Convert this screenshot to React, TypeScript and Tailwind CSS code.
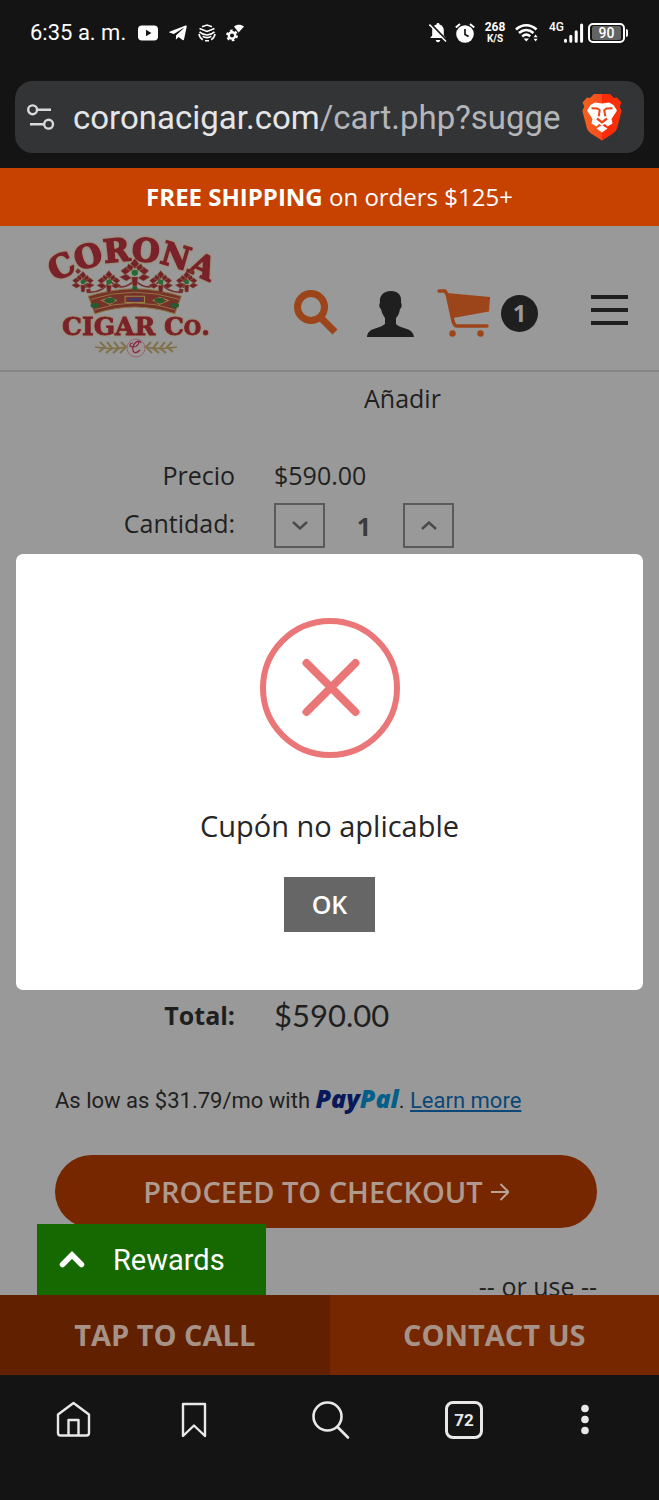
import React from "react";
import { FaTelegramPlane } from "react-icons/fa";

function StatusBar() {
  return (
    <div className="flex h-[66px] items-center justify-between pr-[31px] pl-[30px] text-white">
      <div className="flex items-center gap-[10px]">
        <span className="pr-[2px] text-[22px] leading-7">6:35 a. m.</span>
        <svg className="h-4 w-5" viewBox="0 0 20 16" aria-hidden="true">
          <rect width="20" height="15" y="0.5" rx="4" fill="#fff" />
          <path d="M8 4.800v6.400L13.400 8z" fill="#141414" />
        </svg>
        <FaTelegramPlane className="size-5" aria-hidden="true" />
        <svg className="size-[18px]" viewBox="0 0 18 18" fill="none" stroke="#fff" strokeWidth="1.6" aria-hidden="true">
          <path d="M4 2.800L9 1l5 1.800M1.500 4.600L9 7.400l7.500-2.800M1.500 7.800c2.400 2.200 4.700 3.200 7.500 3.200s5.100-1 7.500-3.200M4.600 12.400c2.800 1.600 6 1.600 8.800 0M1 9.800c.4 2.800 1.800 4.800 3.800 6M17 9.800c-.4 2.800-1.800 4.800-3.800 6M7 16.800h4" />
        </svg>
        <svg className="size-[18px]" viewBox="0 0 18 18" aria-hidden="true">
          <path d="M8 2.600C10.800.2 15 .2 18 2.600L12.600 8.600z" fill="#fff" />
          <circle cx="6" cy="11.400" r="3.200" fill="none" stroke="#fff" strokeWidth="2.400" />
          <circle cx="6" cy="11.400" r="4.900" fill="none" stroke="#fff" strokeWidth="2" strokeDasharray="2.600 2.530" />
        </svg>
      </div>
      <div className="flex items-center">
        <svg className="h-5 w-[18px]" viewBox="0 0 18 20" aria-hidden="true">
          <path d="M9 0c1 0 1.500.6 1.500 1.600 2.800.8 4.300 3 4.300 5.900v5l2 2.500H1.200l2-2.500v-5c0-2.900 1.500-5.100 4.300-5.900C7.500.6 8 0 9 0z" fill="#fff" />
          <path d="M6.800 17h4.400c0 1.300-1 2.200-2.200 2.200S6.800 18.300 6.800 17z" fill="#fff" />
          <path d="M1.500.6L18 17.600" stroke="#141414" strokeWidth="2" />
          <path d="M.4 1.600L17 18.600" stroke="#fff" strokeWidth="1.500" />
        </svg>
        <svg className="ml-2 h-5 w-5" viewBox="0 0 20 20" aria-hidden="true">
          <circle cx="10" cy="11" r="8.800" fill="#fff" />
          <path d="M.8 4.600L5 1M19.200 4.600L15 1" stroke="#fff" strokeWidth="2" />
          <path d="M10 6v5.400l3.600 2.200" stroke="#141414" strokeWidth="1.700" fill="none" />
        </svg>
        <div className="ml-[10px] flex w-5 flex-col items-center font-bold">
          <span className="text-[12px] leading-3">268</span>
          <span className="text-[10px] leading-3">K/S</span>
        </div>
        <svg className="ml-[10px] h-[20px] w-6" viewBox="0 0 24 20" fill="none" stroke="#fff" strokeWidth="2.600" aria-hidden="true">
          <path d="M1 6.500C7 .8 15.500.8 21.500 6.500M4 10c4.500-4 10-4 14.500 0M7.200 13.400c2.600-2.200 5.600-2.200 8 0" />
          <path d="M8.600 15.600h5.400L11.300 18.600zM18.600 14.200h4L20.600 11.600zM18.600 15.800h4L20.600 18.600z" fill="#fff" stroke="none" />
        </svg>
        <span className="ml-[10px] self-start text-[12px] leading-3 font-medium">4G</span>
        <svg className="h-5 w-5" viewBox="0 0 20 20" stroke="#fff" strokeWidth="3" strokeLinecap="round" aria-hidden="true">
          <path d="M1.500 18.200v-1M6.800 18.200v-5M12.200 18.200v-9.500M17.600 18.200V2" />
        </svg>
        <div className="ml-1 flex h-5 w-[37px] items-center justify-center rounded-[5px] border-2 border-white">
          <span className="flex h-[14px] w-[29px] items-center justify-center rounded-[2px] bg-[#636363] text-[14px] leading-4 font-medium">90</span>
        </div>
        <span className="ml-px h-2 w-[2px] rounded-r bg-white" />
      </div>
    </div>
  );
}

function BraveIcon() {
  return (
    <svg className="h-12 w-10" viewBox="0 0 40 48" aria-hidden="true">
      <defs>
        <linearGradient id="lion" x1="0" x2="1">
          <stop offset="0" stopColor="#f4631e" />
          <stop offset="0.500" stopColor="#fa4a1c" />
          <stop offset="0.500" stopColor="#ff2a05" />
          <stop offset="1" stopColor="#f5300c" />
        </linearGradient>
      </defs>
      <path d="M12 1h16l4 4 3-.6 4.400 5-1.600 4.200 1.800 4.400-4.600 17.400Q34 38.500 31 40.500L20 47.500 9 40.500Q6 38.500 5 35.400L.4 18l1.800-4.400L.6 9.400 5 4.400 8 5z" fill="url(#lion)" />
      <path d="M13 9.500l7 1 7-1 4.500 2.500 3.500 5.500-5.500 8.500 1 4.500-5 3-2.500-2.500-3 1.500-3-1.500-2.500 2.500-5-3 1-4.500L5 17.500 8.500 12z" fill="#fff" />
      <path d="M9.500 15.200l6 .3 2.200 1.800-1 6M30.500 15.200l-6 .3-2.200 1.800 1 6" fill="none" stroke="#ef4318" strokeWidth="2" />
      <path d="M15 25.500l5 3.800 5-3.800" fill="none" stroke="#ef4318" strokeWidth="2.200" />
      <path d="M20 32l5.500 3.600L20 39.500l-5.500-3.900z" fill="#fff" />
    </svg>
  );
}

function AddressBar() {
  return (
    <div className="mx-[15px] my-[15px] flex h-[72px] items-center rounded-[18px] bg-[#333436] pr-[22px] pl-3">
      <button type="button" aria-label="Site settings">
        <svg className="h-[26px] w-7" viewBox="0 0 28 26" fill="none" stroke="#d8dadd" strokeWidth="2.400" aria-hidden="true">
          <circle cx="5.600" cy="5.800" r="4.400" />
          <path d="M10 5.800h14M3 20.200h14" />
          <circle cx="21.600" cy="20.200" r="4.400" />
        </svg>
      </button>
      <button type="button" className="ml-[18px] min-w-0 flex-1 overflow-hidden pt-[2px] text-left text-[33px] leading-[46px] whitespace-nowrap text-[#b4b6b9]">
        <span className="text-[#e4e5e7]">coronacigar.com</span>/cart.php?sugge
      </button>
      <button type="button" aria-label="Shields" className="ml-5">
        <BraveIcon />
      </button>
    </div>
  );
}

function Flower({ x, y, s }: { x: number; y: number; s: number }) {
  return (
    <g transform={`translate(${x} ${y}) scale(${s})`}>
      <g fill="#74222a" stroke="#87703f" strokeWidth="0.500">
        <path d="M0-14l4 5-4 5-4-5zM-6-9l5 3-2 4-5-2zM6-9L1-6l2 4 5-2zM-13-2l5-4 4 4-5 4zM13-2L8-6 4-2l5 4zM-14 4l6-3 5 4-5 3zM14 4L8 1 3 5l5 3zM-3 4h6L2 13h-4z" />
      </g>
      <circle r="3" fill="#286b32" />
    </g>
  );
}

function Logo() {
  return (
    <svg className="h-[124px] w-[176px] overflow-visible" viewBox="0 0 176 124" role="img" aria-label="Corona Cigar Co.">
      <defs>
        <path id="arc" d="M-6 55Q86 -5 178 55" />
      </defs>
      <g
        className="drop-shadow-[0_0_1px_#a8813f]"
        fill="#7a222b"
        stroke="#7a222b"
        strokeWidth="1.400"
        fontFamily="'DejaVu Serif', serif"
        fontWeight="700"
      >
        <text fontSize="32">
          <textPath href="#arc" startOffset="50%" textAnchor="middle">CORONA</textPath>
        </text>
        <text x="90" y="99" fontSize="25" strokeWidth="0.800" textAnchor="middle">
          CIGAR C<tspan fontSize="20">O</tspan>.
        </text>
      </g>
      <g transform="translate(-3 -7) scale(1.080 1.020)">
        <g fill="none" stroke="#74322a" strokeWidth="1.600">
          <path d="M31 40q8 6 12 24M139 40q-8 6-12 24" strokeWidth="4" strokeDasharray="4 1.500" />
          <path d="M41 62c10 1 18-4 21-12 4 8 14 10 23 0 9 10 19 8 23 0 3 8 11 13 21 12" />
        </g>
        <path d="M42 66q43-15 86 0l-6 17q-37-13-74 0z" fill="#743228" stroke="#8b713e" strokeWidth="1" />
        <path d="M44 69q41-14 82 0M48 79q37-13 74 0" fill="none" stroke="#99804a" strokeWidth="0.800" />
        <path d="M54 70l8-3 6 3-6 4zM102 70l6-3 8 3-8 4zM76 66h18v6H76z" fill="none" stroke="#9b8249" strokeWidth="1" />
        <g fill="#275a30">
          <ellipse cx="62" cy="70" rx="4.500" ry="2.600" />
          <ellipse cx="108" cy="70" rx="4.500" ry="2.600" />
          <ellipse cx="48" cy="75" rx="4" ry="2.400" />
          <ellipse cx="122" cy="75" rx="4" ry="2.400" />
          <circle cx="85" cy="58" r="2.400" />
        </g>
        <rect x="79" y="67.500" width="12" height="3" fill="#453766" />
        <Flower x={85} y={43} s={1} />
        <Flower x={61} y={52} s={0.800} />
        <Flower x={109} y={52} s={0.800} />
        <Flower x={37} y={52} s={0.750} />
        <Flower x={133} y={52} s={0.750} />
      </g>
      <g transform="translate(4 0)">
        <g fill="none" stroke="#80714a" strokeWidth="2">
          <path d="M45 111q16 3 33 0M94 111q16 3 33 0" strokeWidth="1.300" />
          <path d="M50 106l5 5-6 5M57 106l5 6-6 5M64 106l5 6-6 5M71 106l5 5-6 6M122 106l-5 5 6 5M115 106l-5 6 6 5M108 106l-5 6 6 5M101 106l-5 5 6 6" />
        </g>
        <circle cx="86" cy="112" r="9" fill="#9c9696" stroke="#8b5960" strokeWidth="0.700" />
        <path d="M91 107c-1-4-7-1-8 4s2 8 7 3M83 107c-4 0-4 4 0 4 5 0 8-6 4-6" fill="none" stroke="#8a2540" strokeWidth="1.200" />
      </g>
    </svg>
  );
}

function SiteHeader() {
  return (
    <header className="flex h-[146px] items-start border-b-2 border-[#858585] pr-[31px] pl-[46px]">
      <a href="#home" className="mt-[10px]">
        <Logo />
      </a>
      <div className="mt-[60px] ml-auto flex items-center">
        <a href="#search" aria-label="Search">
          <svg className="size-[50px]" viewBox="1 1 50 50" fill="none" stroke="#9c451b" aria-hidden="true">
            <circle cx="20" cy="20" r="13.500" strokeWidth="7" />
            <path d="M30 31l14 14" strokeWidth="7" />
          </svg>
        </a>
        <a href="#account" aria-label="Account" className="ml-[23px]">
          <svg className="size-[50px]" viewBox="0 0 50 50" fill="#1f1f1f" aria-hidden="true">
            <path d="M26 3c-8 0-12 5-11 12-1 0-1 5 1 6 1 5 3 7 4 9v6c-5 5-17 3-18 13h47c-1-10-14-8-18-13v-6c2-2 3-4 4-9 2-1 2-6 1-6 1-7-2-12-10-12z" />
          </svg>
        </a>
        <a href="#cart" aria-label="Cart, 1 item" className="ml-[22px] flex items-center">
          <svg className="size-[54px]" viewBox="-1 -1 54 54" aria-hidden="true">
            <path d="M8.500 6L52 10l-1 14.500L15 31z" fill="#9c451b" />
            <path d="M1 4h6l2 3 6 27c1 4 2 5 4 5h30" fill="none" stroke="#9c451b" strokeWidth="3.400" strokeLinecap="round" />
            <circle cx="14.500" cy="46.500" r="3.200" fill="#9c451b" />
            <circle cx="42.500" cy="46.500" r="3.200" fill="#9c451b" />
          </svg>
          <span className="ml-[10px] flex size-[37px] items-center justify-center rounded-full bg-[#1f1f1f] text-[24px] leading-8 font-bold text-[#999]">1</span>
        </a>
        <button type="button" aria-label="Menu" className="mb-[6px] ml-[53px] flex w-[37px] flex-col gap-[9px]">
          <span className="h-1 w-full bg-[#1f1f1f]" />
          <span className="h-1 w-full bg-[#1f1f1f]" />
          <span className="h-1 w-full bg-[#1f1f1f]" />
        </button>
      </div>
    </header>
  );
}

function Cart() {
  return (
    <main className="pt-2 pr-[62px] pl-[55px] text-[25px] leading-9 text-[#1f1f1f]">
      <div className="grid grid-cols-[180px_1fr] gap-x-[39px]">
        <a href="#add" className="col-start-2 justify-self-start pl-[90px]">Añadir</a>
        <span className="mt-[41px] text-right">Precio</span>
        <span className="mt-[41px]">$590.00</span>
        <label htmlFor="qty" className="mt-3 text-right">Cantidad:</label>
        <div className="mt-[10px] flex items-center">
          <button type="button" aria-label="Menos" className="flex h-[45px] w-[51px] items-center justify-center border-2 border-[#5a5a5a]">
            <svg className="h-[9px] w-4" viewBox="0 0 16 9" fill="none" stroke="#4a4a4a" strokeWidth="2.400" aria-hidden="true"><path d="M1 1l7 6.500L15 1" /></svg>
          </button>
          <input id="qty" defaultValue="1" className="w-[78px] bg-transparent text-center font-bold text-[#3b3b3b] outline-none" />
          <button type="button" aria-label="Más" className="flex h-[45px] w-[51px] items-center justify-center border-2 border-[#5a5a5a]">
            <svg className="h-[9px] w-4" viewBox="0 0 16 9" fill="none" stroke="#4a4a4a" strokeWidth="2.400" aria-hidden="true"><path d="M1 8l7-6.500L15 8" /></svg>
          </button>
        </div>
        <span className="mt-[449px] text-right font-bold">Total:</span>
        <span className="mt-[449px] font-[Lato,sans-serif] text-[31px]">$590.00</span>
      </div>
      <p className="mt-[50px] font-[Roboto,sans-serif] text-[22px] whitespace-nowrap">
        As low as $31.79/mo with{" "}
        <span className="font-['Open_Sans',sans-serif] text-[25px] leading-none font-extrabold text-[#07195a] italic">
          Pay<span className="text-[#035f8a]">Pal</span>
        </span>
        . <a href="#paypal" className="text-[#0b4777] underline">Learn more</a>
      </p>
      <button type="button" className="mt-9 flex h-[73px] w-full items-center justify-center gap-2 rounded-full bg-[#772700] text-[29px] font-semibold text-[#b09a8f]">
        PROCEED TO CHECKOUT
        <svg className="h-5 w-[18px]" viewBox="0 0 18 20" fill="none" stroke="#b7a398" strokeWidth="2" aria-hidden="true"><path d="M0 10h17M9.500 2l8 8-8 8" /></svg>
      </button>
      <p className="mt-10 text-right">-- or use --</p>
    </main>
  );
}

function ContactBar() {
  return (
    <div className="relative -mt-[9px] flex h-20 text-[29px] leading-9 font-bold text-[#a69287]">
      <button type="button" className="absolute bottom-full left-[37px] z-20 flex h-[71px] w-[229px] items-center bg-[#156900] pl-[22px] font-[Roboto,sans-serif] text-[29px] font-normal text-white">
        <svg className="h-5 w-[26px]" viewBox="0 0 26 20" fill="none" stroke="#fff" strokeWidth="5.500" strokeLinecap="round" aria-hidden="true"><path d="M3.500 14.500L13 5l9.500 9.500" /></svg>
        <span className="ml-7">Rewards</span>
      </button>
      <a href="#call" className="flex flex-1 items-center justify-center bg-[#612000]">TAP TO CALL</a>
      <a href="#contact" className="flex flex-1 items-center justify-center bg-[#772700]">CONTACT US</a>
    </div>
  );
}

function ErrorDialog() {
  return (
    <div className="absolute inset-0 z-10 flex items-center px-4">
      <div role="dialog" aria-labelledby="dialog-title" className="flex w-full flex-col items-center rounded-[7px] bg-white pt-16 pb-[58px]">
        <svg className="size-[140px]" viewBox="0 0 140 140" fill="none" stroke="#ea7678" aria-hidden="true">
          <circle cx="70" cy="70" r="67" strokeWidth="6" />
          <path d="M46.500 45l49 49M95.500 45l-49 49" strokeWidth="8" strokeLinecap="round" />
        </svg>
        <h2 id="dialog-title" className="mt-12 text-[29px] leading-10 text-[#262626]">Cupón no aplicable</h2>
        <button type="button" className="mt-[31px] flex h-[55px] w-[91px] items-center justify-center bg-[#666] text-[25px] leading-8 font-semibold text-white">OK</button>
      </div>
    </div>
  );
}

function BrowserNav() {
  return (
    <nav className="flex h-[125px] items-start bg-[#141414] pt-[25px] pr-[70px] pl-[55px] text-[#e8e8e8]">
      <div className="flex flex-1 items-center justify-between">
        <button type="button" aria-label="Home">
          <svg className="h-[38px] w-9" viewBox="0 0 36 38" fill="none" stroke="currentColor" strokeWidth="2.400" strokeLinejoin="round" aria-hidden="true">
            <path d="M3 13.500L18.500 2 34 13.500V32q0 2.500-2.500 2.500h-26Q3 34.500 3 32zM13.500 34V19h10v15" />
          </svg>
        </button>
        <button type="button" aria-label="Bookmarks">
          <svg className="h-[38px] w-7" viewBox="0 0 28 38" fill="none" stroke="currentColor" strokeWidth="2.400" strokeLinejoin="round" aria-hidden="true">
            <path d="M3 3h22v32L14 24.500 3 35z" />
          </svg>
        </button>
        <button type="button" aria-label="Search the web" className="mr-[6px] ml-[13px]">
          <svg className="h-10 w-10" viewBox="0 0 40 40" fill="none" stroke="currentColor" strokeWidth="2.600" strokeLinecap="round" aria-hidden="true">
            <circle cx="17.500" cy="16.500" r="14" />
            <path d="M27.500 27L38 37.500" />
          </svg>
        </button>
        <button type="button" aria-label="72 tabs" className="mr-[9px] flex size-[38px] items-center justify-center rounded-[8px] border-[3px] border-[#e8e8e8] font-[Roboto,sans-serif] text-[17px] leading-5 font-bold">72</button>
        <button type="button" aria-label="More">
          <svg className="h-8 w-2" viewBox="0 0 8 32" fill="currentColor" aria-hidden="true">
            <circle cx="4" cy="4.500" r="3.800" />
            <circle cx="4" cy="15.500" r="3.800" />
            <circle cx="4" cy="26.500" r="3.800" />
          </svg>
        </button>
      </div>
    </nav>
  );
}

export default function App() {
  return (
    <div className="flex min-h-screen flex-col bg-[#141414]">
      <div className="font-[Roboto,sans-serif]">
        <StatusBar />
        <AddressBar />
      </div>
      <div className="relative bg-[#999] font-['Open_Sans',sans-serif]">
        <div className="flex h-[58px] items-center justify-center bg-[#c74100] text-[24px] leading-8 text-white">
          <p>
            <strong>FREE SHIPPING</strong> on orders $125+
          </p>
        </div>
        <SiteHeader />
        <Cart />
        <ContactBar />
        <ErrorDialog />
      </div>
      <BrowserNav />
    </div>
  );
}
